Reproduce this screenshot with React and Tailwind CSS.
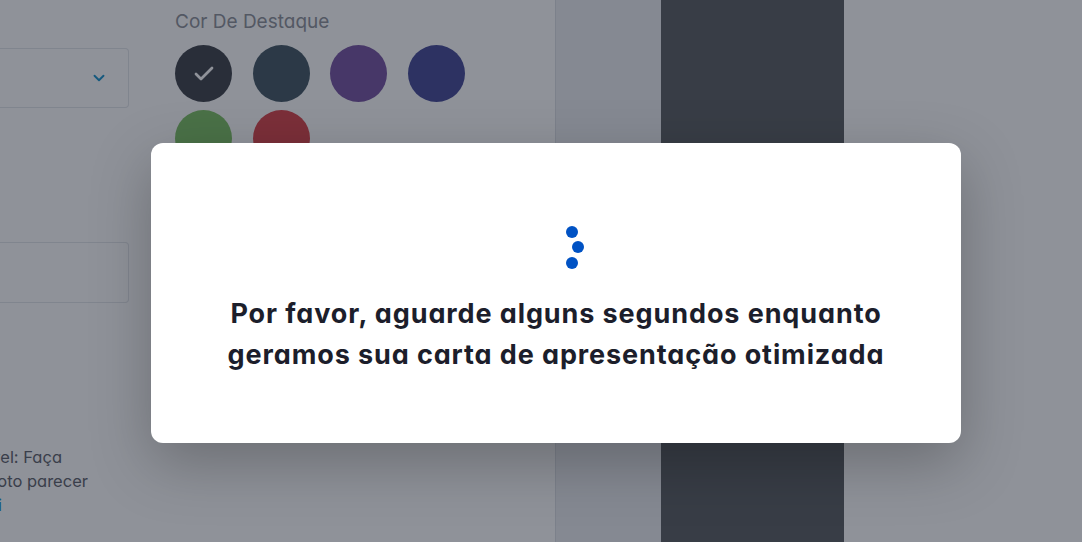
import { Check, ChevronDown } from 'lucide-react'

const CORES = ['#3f434b', '#445865', '#7754a2', '#464b98', '#7ec064', '#d9444b']

function Swatch({ cor, ativo }) {
  return (
    <button type="button"
            className="w-[57px] h-[57px] rounded-full flex items-center justify-center"
            style={{ background: cor }}>
      {ativo && <Check className="w-[24px] h-[24px] text-white" strokeWidth={2.75} />}
    </button>
  )
}

function PainelEditor() {
  return (
    <div className="w-[556px] shrink-0 h-full bg-white border-r border-[#dcdfe4] flex overflow-hidden">
      {/* coluna esquerda (cortada pela rolagem horizontal) */}
      <div className="w-[129px] shrink-0 flex flex-col">
        <div className="mt-[48px] h-[60px] rounded-r border border-l-0 border-[#e3e6ea] flex items-center justify-end pr-5">
          <ChevronDown className="w-[18px] h-[18px] text-[#1a93cc]" strokeWidth={2.5} />
        </div>
        <div className="mt-[134px] h-[61px] rounded-r border border-l-0 border-[#e3e6ea]" />
        <div className="mt-[142px] flex flex-col items-end text-[16.5px] leading-[24px] text-[#5f636c]">
          <div className="whitespace-nowrap mr-[67px]">Dica de nível: Faça</div>
          <div className="whitespace-nowrap mr-[41px]">sua foto parecer</div>
          <div className="whitespace-nowrap mr-[127px] text-[#1a93cc]">Saiba mais aqui</div>
        </div>
      </div>
      <div className="ml-[46px] pt-[10px]">
        <div className="text-[19px] leading-[24px] text-[#8e929a]">Cor De Destaque</div>
        <div className="mt-[11px] grid grid-cols-4 gap-x-[20px] gap-y-[8px] w-[290px]">
          {CORES.map((c, i) => <Swatch key={c} cor={c} ativo={i === 0} />)}
        </div>
      </div>
    </div>
  )
}

function Preview() {
  return (
    <div className="flex-1 h-full bg-[#eceef1] flex">
      <div className="w-[105px] shrink-0" />
      <div className="w-[183px] shrink-0 bg-[#5c5f63]" />
      <div className="flex-1 bg-white" />
    </div>
  )
}

function Spinner() {
  return (
    <svg viewBox="0 0 24 46" className="w-[24px] h-[46px]">
      <circle cx="7" cy="7" r="6" fill="#0052c4" />
      <circle cx="13" cy="22" r="6" fill="#0052c4" />
      <circle cx="7" cy="38" r="6" fill="#0052c4" />
    </svg>
  )
}

export default function App() {
  return (
    <div className="relative w-[1082px] h-[542px] overflow-hidden [font-family:Inter,'Noto_Sans',sans-serif] [font-feature-settings:'cv11']">
      <div className="flex h-full">
        <PainelEditor />
        <Preview />
      </div>

      <div className="absolute inset-0 bg-[#111827]/[0.47] pl-[151px] pt-[143px]">
        <div className="w-[810px] h-[300px] bg-white rounded-xl shadow-[0_20px_60px_rgba(0,0,0,0.25)] flex flex-col items-center pt-[82px]">
          <div className="pl-[42px]"><Spinner /></div>
          <p className="mt-[22px] text-center text-[27px] leading-[41px] font-bold text-[#1c1e2b] tracking-[0.9px]">
            Por favor, aguarde alguns segundos enquanto<br />
            geramos sua carta de apresentação otimizada
          </p>
        </div>
      </div>
    </div>
  )
}
